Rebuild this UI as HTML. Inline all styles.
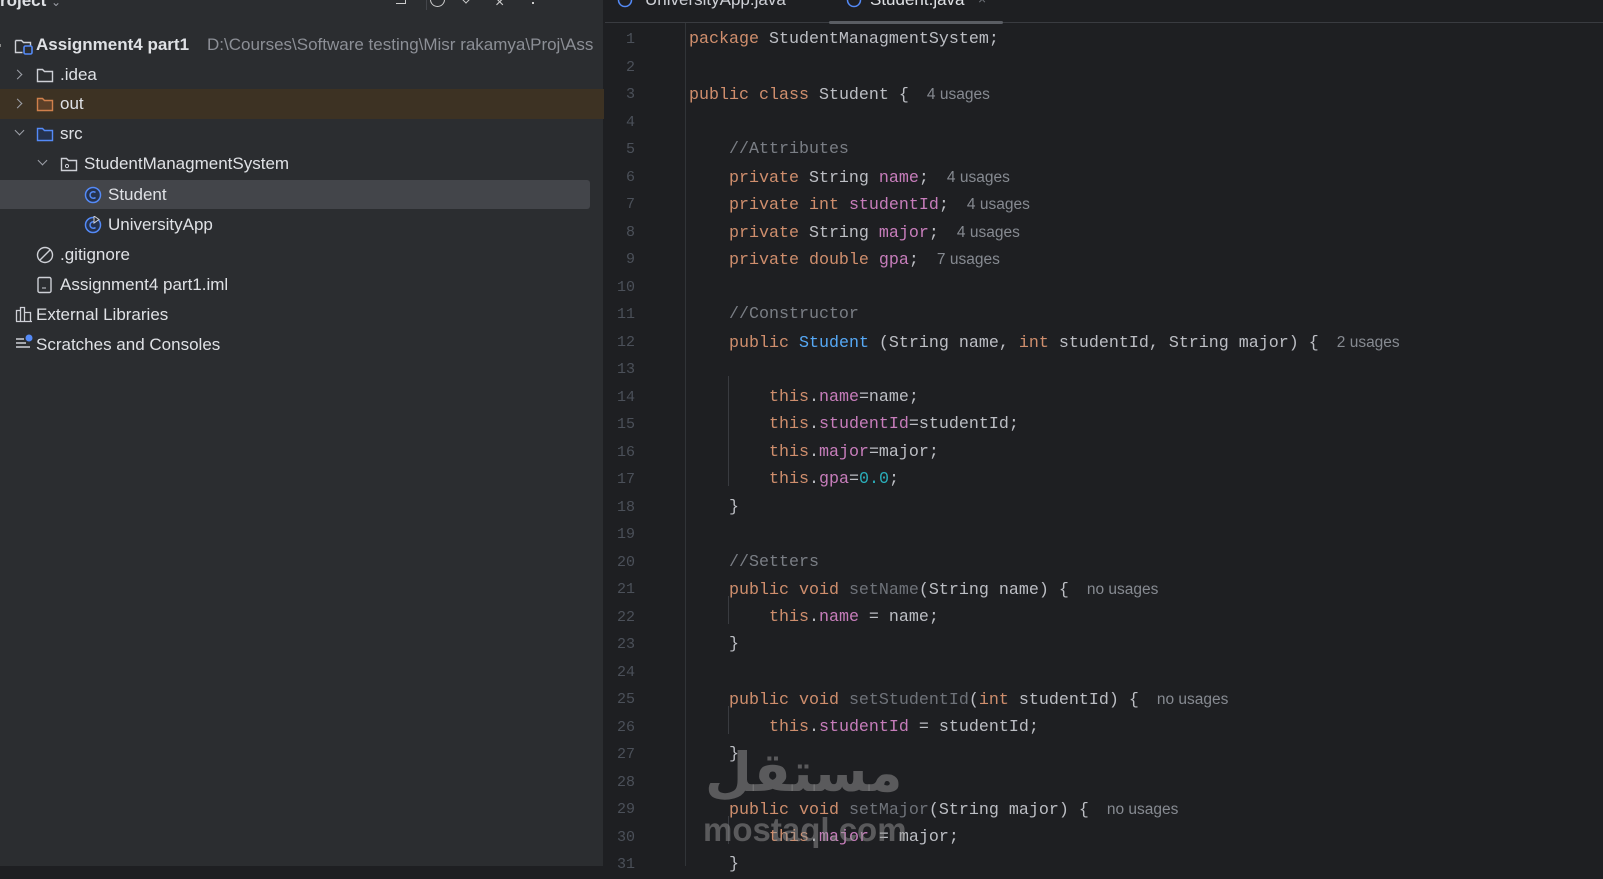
<!DOCTYPE html>
<html><head><meta charset="utf-8">
<style>
*{margin:0;padding:0;box-sizing:border-box}
body{width:1603px;height:866px;overflow:hidden;background:#1e1f22;position:relative;font-family:"Liberation Sans",sans-serif}
#left{position:absolute;left:0;top:0;width:604px;height:866px;background:#2b2d30;border-right:1px solid #1e1f22}
.row{position:absolute;left:0;width:604px;height:30px;font-size:17px;color:#dfe1e5;line-height:30px;white-space:nowrap}
.row span.t{position:absolute}
.chev{position:absolute;width:7px;height:7px;border-right:1.5px solid #9da0a8;border-bottom:1.5px solid #9da0a8}
.chev.r{transform:rotate(-45deg)}
.chev.d{transform:rotate(45deg)}
.ic{position:absolute;top:7px}
#ed{position:absolute;left:605px;top:0;right:0;bottom:0}
.ln{position:absolute;left:605px;width:30px;text-align:right;font-family:"Liberation Mono",monospace;font-size:15px;color:#4b5059;height:27.5px;line-height:27.5px}
.cl{position:absolute;left:689px;font-family:"Liberation Mono",monospace;font-size:16.67px;color:#bcbec4;white-space:pre;height:27.5px;line-height:27.5px}
.k{color:#cf8e6d}.f{color:#c77dbb}.n{color:#2aacb8}.c{color:#7a7e85}.m{color:#56a8f5}.u{color:#6f737a}
.h{font-family:"Liberation Sans",sans-serif;font-size:15.5px;color:#868a91;margin-left:18px}
.g{position:absolute;width:1px;background:#393b40}
</style></head><body>
<div id="left">
  <div style="position:absolute;left:0;top:-9px;font-size:17px;color:#dfe1e5;font-weight:bold">roject <span style="color:#9da0a8;font-weight:normal;font-size:12px">⌄</span></div>
  <div style="position:absolute;left:396px;top:-6px;width:10px;height:10px;border-right:1.5px solid #ccc;border-bottom:1.5px solid #ccc"></div>
  <div style="position:absolute;left:426px;top:-4px;width:1px;height:14px;background:#43454a"></div>
  <div style="position:absolute;left:430px;top:-8px;width:15px;height:15px;border:1.5px solid #ccc;border-radius:50%"></div>
  <div style="position:absolute;left:462px;top:-6px;width:8px;height:8px;border-right:1.5px solid #ccc;border-bottom:1.5px solid #ccc;transform:rotate(45deg)"></div>
  <div style="position:absolute;left:495px;top:-6px;color:#ccc;font-size:16px">×</div>
  <div style="position:absolute;left:532px;top:2px;width:2px;height:2px;background:#ccc"></div>

  <div class="row" style="top:30px"><div style="position:absolute;left:-2px;top:14px;width:3px;height:3px;background:#888"></div>
    <svg class="ic" style="left:14px" width="20" height="18"><path d="M1.5 3.5h6l2 2h7v4" fill="none" stroke="#ced0d6" stroke-width="1.4"/><path d="M1.5 3.5v12h7" fill="none" stroke="#ced0d6" stroke-width="1.4"/><rect x="10" y="9" width="8" height="8" rx="1.5" fill="none" stroke="#548af7" stroke-width="1.6"/></svg>
    <span class="t" style="left:36px;font-weight:bold">Assignment4 part1</span><span class="t" style="left:207px;color:#8c8f96">D:\Courses\Software testing\Misr rakamya\Proj\Ass</span></div>
  <div class="row" style="top:60px"><div class="chev r" style="left:14px;top:11px"></div>
    <svg class="ic" style="left:36px" width="18" height="16"><path d="M1.5 2.5h5l2 2h8v10h-15z" fill="none" stroke="#ced0d6" stroke-width="1.4"/></svg>
    <span class="t" style="left:60px">.idea</span></div>
  <div class="row" style="top:89px;background:#3d3223"><div class="chev r" style="left:14px;top:11px"></div>
    <svg class="ic" style="left:36px" width="18" height="16"><path d="M1.5 2.5h5l2 2h8v10h-15z" fill="#5c3f28" stroke="#d0804c" stroke-width="1.4"/></svg>
    <span class="t" style="left:60px">out</span></div>
  <div class="row" style="top:119px"><div class="chev d" style="left:16px;top:8px"></div>
    <svg class="ic" style="left:36px" width="18" height="16"><path d="M1.5 2.5h5l2 2h8v10h-15z" fill="#25324d" stroke="#548af7" stroke-width="1.4"/></svg>
    <span class="t" style="left:60px">src</span></div>
  <div class="row" style="top:149px"><div class="chev d" style="left:39px;top:8px"></div>
    <svg class="ic" style="left:60px" width="18" height="16"><path d="M1.5 2.5h5l2 2h8v10h-15z" fill="none" stroke="#ced0d6" stroke-width="1.4"/><circle cx="7" cy="10" r="1.6" fill="none" stroke="#ced0d6"/></svg>
    <span class="t" style="left:84px">StudentManagmentSystem</span></div>
  <div class="row" style="top:180px;height:29px;width:590px;background:#43454a;border-radius:0 3px 3px 0"><svg class="ic" style="left:84px;top:6px" width="18" height="18"><circle cx="9" cy="9" r="7.5" fill="#25324d" stroke="#548af7" stroke-width="1.5"/><path d="M11.5 6.5a3.3 3.3 0 1 0 0 5" fill="none" stroke="#548af7" stroke-width="1.5"/></svg>
    <span class="t" style="left:108px;top:0px">Student</span></div>
  <div class="row" style="top:210px"><svg class="ic" style="left:84px;top:6px" width="18" height="18"><circle cx="9" cy="9" r="7.5" fill="#25324d" stroke="#548af7" stroke-width="1.5"/><path d="M11.5 6.5a3.3 3.3 0 1 0 0 5" fill="none" stroke="#548af7" stroke-width="1.5"/><path d="M10 0v7l5-3.5z" fill="#2b2d30" stroke="#ced0d6"/></svg>
    <span class="t" style="left:108px">UniversityApp</span></div>
  <div class="row" style="top:240px"><svg class="ic" style="left:36px;top:6px" width="18" height="18"><circle cx="9" cy="9" r="7.5" fill="none" stroke="#ced0d6" stroke-width="1.4"/><path d="M4 14L14 4" stroke="#ced0d6" stroke-width="1.4"/></svg>
    <span class="t" style="left:60px">.gitignore</span></div>
  <div class="row" style="top:270px"><svg class="ic" style="left:37px;top:6px" width="16" height="18"><rect x="1" y="1.5" width="13" height="15" rx="1.5" fill="none" stroke="#ced0d6" stroke-width="1.4"/><path d="M5 12h4" stroke="#ced0d6"/></svg>
    <span class="t" style="left:60px">Assignment4 part1.iml</span></div>
  <div class="row" style="top:300px"><svg class="ic" style="left:15px;top:5px" width="18" height="18"><path d="M1.5 16.5v-11h4v11M5.5 16.5v-14h4v14M9.5 16.5v-9h6v9zM1 16.5h16" fill="none" stroke="#ced0d6" stroke-width="1.3"/></svg>
    <span class="t" style="left:36px">External Libraries</span></div>
  <div class="row" style="top:330px"><svg class="ic" style="left:15px;top:4px" width="20" height="18"><path d="M1 5h8M1 9h10M1 13h14" stroke="#ced0d6" stroke-width="1.4"/><circle cx="14" cy="4" r="3.5" fill="#548af7"/></svg>
    <span class="t" style="left:36px">Scratches and Consoles</span></div>
</div>

<div id="ed"></div>
<div style="position:absolute;left:605px;top:22px;right:0;height:1px;background:#393b40"></div>
<svg style="position:absolute;left:617px;top:-8px" width="16" height="16"><circle cx="8" cy="8" r="6.5" fill="none" stroke="#548af7" stroke-width="1.5"/></svg>
<div style="position:absolute;left:645px;top:-10px;color:#ced0d6;font-size:17px">UniversityApp.java</div>
<svg style="position:absolute;left:846px;top:-8px" width="16" height="16"><circle cx="8" cy="8" r="6.5" fill="none" stroke="#548af7" stroke-width="1.5"/></svg>
<div style="position:absolute;left:870px;top:-10px;color:#dfe1e5;font-size:17px">Student.java</div>
<div style="position:absolute;left:978px;top:-9px;color:#6f737a;font-size:14px">×</div>
<div style="position:absolute;left:829px;top:21px;width:174px;height:3px;background:#5a5d63;border-radius:2px"></div>
<div style="position:absolute;left:685px;top:23px;width:1px;height:843px;background:#313438"></div>

<div class="g" style="left:728px;top:376px;height:110px"></div>
<div class="g" style="left:728px;top:596px;height:28px"></div>
<div class="g" style="left:728px;top:706px;height:28px"></div>
<div class="g" style="left:728px;top:816px;height:28px"></div>

<div class="ln" style="top:26px">1</div><div class="ln" style="top:53.5px">2</div><div class="ln" style="top:81px">3</div><div class="ln" style="top:108.5px">4</div><div class="ln" style="top:136px">5</div><div class="ln" style="top:163.5px">6</div><div class="ln" style="top:191px">7</div><div class="ln" style="top:218.5px">8</div><div class="ln" style="top:246px">9</div><div class="ln" style="top:273.5px">10</div><div class="ln" style="top:301px">11</div><div class="ln" style="top:328.5px">12</div><div class="ln" style="top:356px">13</div><div class="ln" style="top:383.5px">14</div><div class="ln" style="top:411px">15</div><div class="ln" style="top:438.5px">16</div><div class="ln" style="top:466px">17</div><div class="ln" style="top:493.5px">18</div><div class="ln" style="top:521px">19</div><div class="ln" style="top:548.5px">20</div><div class="ln" style="top:576px">21</div><div class="ln" style="top:603.5px">22</div><div class="ln" style="top:631px">23</div><div class="ln" style="top:658.5px">24</div><div class="ln" style="top:686px">25</div><div class="ln" style="top:713.5px">26</div><div class="ln" style="top:741px">27</div><div class="ln" style="top:768.5px">28</div><div class="ln" style="top:796px">29</div><div class="ln" style="top:823.5px">30</div><div class="ln" style="top:851px">31</div>

<div class="cl" style="top:26px"><span class="k">package</span> StudentManagmentSystem;</div>
<div class="cl" style="top:81px"><span class="k">public class</span> Student {<span class="h">4 usages</span></div>
<div class="cl" style="top:136px">    <span class="c">//Attributes</span></div>
<div class="cl" style="top:163.5px">    <span class="k">private</span> String <span class="f">name</span>;<span class="h">4 usages</span></div>
<div class="cl" style="top:191px">    <span class="k">private int</span> <span class="f">studentId</span>;<span class="h">4 usages</span></div>
<div class="cl" style="top:218.5px">    <span class="k">private</span> String <span class="f">major</span>;<span class="h">4 usages</span></div>
<div class="cl" style="top:246px">    <span class="k">private double</span> <span class="f">gpa</span>;<span class="h">7 usages</span></div>
<div class="cl" style="top:301px">    <span class="c">//Constructor</span></div>
<div class="cl" style="top:328.5px">    <span class="k">public</span> <span class="m">Student</span> (String name, <span class="k">int</span> studentId, String major) {<span class="h">2 usages</span></div>
<div class="cl" style="top:383.5px">        <span class="k">this</span>.<span class="f">name</span>=name;</div>
<div class="cl" style="top:411px">        <span class="k">this</span>.<span class="f">studentId</span>=studentId;</div>
<div class="cl" style="top:438.5px">        <span class="k">this</span>.<span class="f">major</span>=major;</div>
<div class="cl" style="top:466px">        <span class="k">this</span>.<span class="f">gpa</span>=<span class="n">0.0</span>;</div>
<div class="cl" style="top:493.5px">    }</div>
<div class="cl" style="top:548.5px">    <span class="c">//Setters</span></div>
<div class="cl" style="top:576px">    <span class="k">public void</span> <span class="u">setName</span>(String name) {<span class="h">no usages</span></div>
<div class="cl" style="top:603.5px">        <span class="k">this</span>.<span class="f">name</span> = name;</div>
<div class="cl" style="top:631px">    }</div>
<div class="cl" style="top:686px">    <span class="k">public void</span> <span class="u">setStudentId</span>(<span class="k">int</span> studentId) {<span class="h">no usages</span></div>
<div class="cl" style="top:713.5px">        <span class="k">this</span>.<span class="f">studentId</span> = studentId;</div>
<div class="cl" style="top:741px">    }</div>
<div class="cl" style="top:796px">    <span class="k">public void</span> <span class="u">setMajor</span>(String major) {<span class="h">no usages</span></div>
<div class="cl" style="top:823.5px">        <span class="k">this</span>.<span class="f">major</span> = major;</div>
<div class="cl" style="top:851px">    }</div>

<div style="position:absolute;left:705px;top:745px;font-family:'DejaVu Sans',sans-serif;font-size:54px;font-weight:bold;color:rgba(150,150,150,0.5);line-height:56px">مستقل</div>
<div style="position:absolute;left:703px;top:812px;font-family:'Liberation Sans',sans-serif;font-size:33px;font-weight:bold;color:rgba(150,150,150,0.5);line-height:36px">mostaql.com</div>
</body></html>
